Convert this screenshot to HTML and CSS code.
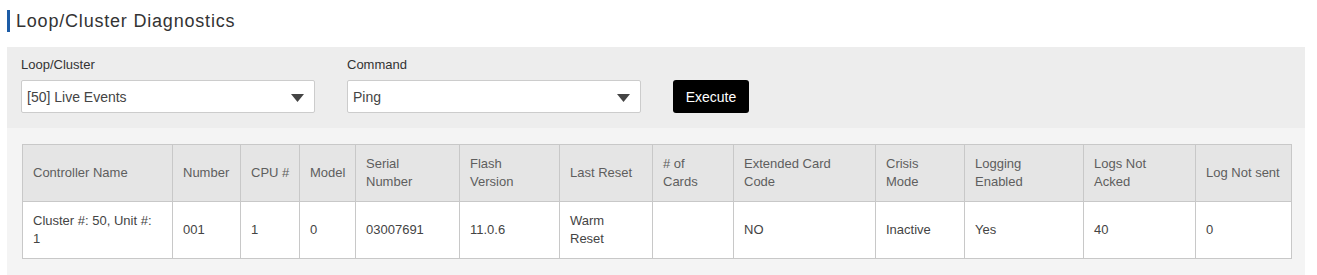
FILE: index.html
```html
<!DOCTYPE html>
<html lang="en">
<head>
    <meta charset="UTF-8">
    <title>Loop/Cluster Diagnostics</title>
    <link rel="stylesheet" href="styles.css">
</head>
<body>
    <div class="page">
        <h1 class="page-title">Loop/Cluster Diagnostics</h1>

        <div class="controls">
            <div class="field">
                <label>Loop/Cluster</label>
                <div class="select">
                    <span>[50] Live Events</span>
                    <svg width="13" height="8" viewBox="0 0 13 8"><path d="M0 0 H13 L6.5 8 Z" fill="#444"/></svg>
                </div>
            </div>
            <div class="field">
                <label>Command</label>
                <div class="select">
                    <span>Ping</span>
                    <svg width="13" height="8" viewBox="0 0 13 8"><path d="M0 0 H13 L6.5 8 Z" fill="#444"/></svg>
                </div>
            </div>
            <button class="btn-execute">Execute</button>
        </div>

        <div class="results">
            <table class="diag-table">
                <colgroup>
                    <col class="c-name"><col class="c-number"><col class="c-cpu"><col class="c-model">
                    <col class="c-serial"><col class="c-flash"><col class="c-reset"><col class="c-cards">
                    <col class="c-ext"><col class="c-crisis"><col class="c-logging"><col class="c-acked">
                    <col class="c-sent">
                </colgroup>
                <thead>
                    <tr>
                        <th>Controller Name</th>
                        <th>Number</th>
                        <th>CPU #</th>
                        <th>Model</th>
                        <th>Serial<br>Number</th>
                        <th>Flash<br>Version</th>
                        <th>Last Reset</th>
                        <th># of<br>Cards</th>
                        <th>Extended Card<br>Code</th>
                        <th>Crisis<br>Mode</th>
                        <th>Logging<br>Enabled</th>
                        <th>Logs Not<br>Acked</th>
                        <th>Log Not sent</th>
                    </tr>
                </thead>
                <tbody>
                    <tr>
                        <td>Cluster #: 50, Unit #:<br>1</td>
                        <td>001</td>
                        <td>1</td>
                        <td>0</td>
                        <td>03007691</td>
                        <td>11.0.6</td>
                        <td>Warm<br>Reset</td>
                        <td></td>
                        <td>NO</td>
                        <td>Inactive</td>
                        <td>Yes</td>
                        <td>40</td>
                        <td>0</td>
                    </tr>
                </tbody>
            </table>
        </div>
    </div>
</body>
</html>
```

FILE: styles.css
```css
body {
    margin: 0;
    font-family: 'Liberation Sans', Arial, sans-serif;
    background: #fff;
    color: #333;
}

.page {
    width: 1298px;
    padding-left: 7px;
}

.page-title {
    margin: 10px 0 15px;
    height: 22px;
    line-height: 23px;
    border-left: 3px solid #1d5ca6;
    padding-left: 6px;
    font-size: 18px;
    letter-spacing: 0.8px;
    font-weight: normal;
    color: #333;
}

.controls {
    background: #ededed;
    padding: 9px 14px 15px;
    display: flex;
    align-items: flex-end;
    gap: 32px;
}

.field label {
    display: block;
    font-size: 13px;
    line-height: 18px;
    margin-bottom: 6px;
    color: #333;
}

.select {
    box-sizing: border-box;
    width: 294px;
    height: 33px;
    background: #fff;
    border: 1px solid #ccc;
    border-radius: 2px;
    display: flex;
    align-items: center;
    justify-content: space-between;
    padding: 0 10px 0 5px;
    font-size: 14px;
    color: #444;
}

.select svg {
    margin-top: 2px;
}

.btn-execute {
    box-sizing: border-box;
    width: 76px;
    height: 33px;
    background: #000;
    color: #fff;
    border: none;
    border-radius: 3px;
    font-family: inherit;
    font-size: 14px;
    cursor: pointer;
}

.results {
    background: #f4f4f4;
    padding: 16px 14px 16px 15px;
}

.diag-table {
    width: 1269px;
    table-layout: fixed;
    border-collapse: collapse;
    background: #fff;
    font-size: 13px;
}

.diag-table th,
.diag-table td {
    border: 1px solid #c8c8c8;
    padding: 10px 10px;
    line-height: 18px;
    text-align: left;
    white-space: nowrap;
    vertical-align: middle;
}

.diag-table th {
    background: #e5e5e5;
    font-weight: normal;
    color: #5e5e5e;
}

.diag-table td {
    color: #444;
}

.c-name { width: 150px; }
.c-number { width: 68px; }
.c-cpu { width: 59px; }
.c-model { width: 56px; }
.c-serial { width: 104px; }
.c-flash { width: 100px; }
.c-reset { width: 93px; }
.c-cards { width: 81px; }
.c-ext { width: 142px; }
.c-crisis { width: 89px; }
.c-logging { width: 119px; }
.c-acked { width: 112px; }
.c-sent { width: 96px; }
```
